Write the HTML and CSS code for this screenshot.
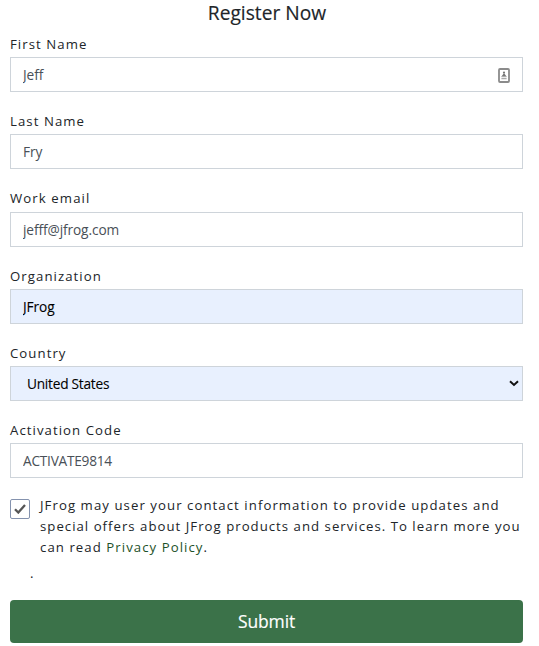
FILE: index.html
```html
<!DOCTYPE html>
<html lang="en">
<head>
<meta charset="utf-8">
<title>Register Now</title>
<link rel="stylesheet" href="styles.css">
</head>
<body>
<form class="form">
  <h1 class="title">Register Now</h1>
  <div class="field">
    <label class="label" for="first">First Name</label>
    <div class="control">
      <input class="input" id="first" type="text" value="Jeff">
      <svg class="contact" viewBox="0 0 12 15" width="12" height="15" aria-hidden="true">
        <rect x="1" y="1" width="10" height="13" rx="1" fill="#fff" stroke="#8b8b8b" stroke-width="1.8"/>
        <circle cx="6" cy="4.5" r="1.1" fill="#777"/>
        <path d="M6 5L8.2 8H3.8Z" fill="#777"/>
        <path d="M3.4 8.7h5.2M3.4 10.7h5.2" stroke="#aaa" stroke-width="1.3"/>
      </svg>
    </div>
  </div>
  <div class="field">
    <label class="label" for="last">Last Name</label>
    <div class="control"><input class="input" id="last" type="text" value="Fry"></div>
  </div>
  <div class="field">
    <label class="label label-email" for="email">Work email</label>
    <div class="control"><input class="input" id="email" type="text" value="jefff@jfrog.com"></div>
  </div>
  <div class="field">
    <label class="label" for="org">Organization</label>
    <div class="control"><input class="input filled" id="org" type="text" value="JFrog"></div>
  </div>
  <div class="field">
    <label class="label" for="country">Country</label>
    <div class="control">
      <select class="input filled select" id="country"><option>United States</option></select>
      <svg class="chevron" viewBox="0 0 10 7" width="10" height="7" aria-hidden="true">
        <path d="M1 1.3L5 5L9 1.3" fill="none" stroke="#111" stroke-width="2"/>
      </svg>
    </div>
  </div>
  <div class="field">
    <label class="label" for="code">Activation Code</label>
    <div class="control"><input class="input code" id="code" type="text" value="ACTIVATE9814"></div>
  </div>
  <div class="consent">
    <span class="checkbox" role="checkbox" aria-checked="true">
      <svg viewBox="0 0 12 10" width="12" height="10" aria-hidden="true">
        <path d="M1 5.2L4.3 8.5L11 1" fill="none" stroke="#555" stroke-width="2.3"/>
      </svg>
    </span>
    <p class="terms">JFrog may user your contact information to provide updates and<br><span class="tight">special offers about JFrog products and services. To learn more you</span><br>can read <a class="link">Privacy Policy</a>.</p>
  </div>
  <p class="dot">.</p>
  <button class="submit" type="button">Submit</button>
</form>
</body>
</html>
```
FILE: styles.css
```css
* { box-sizing: border-box; }
body {
  margin: 0;
  background: #fff;
  color: #212529;
  font: 13.2px/21px "Open Sans", "Noto Sans", sans-serif;
}
.form { width: 513px; margin-left: 10px; }
.title {
  height: 34px;
  margin: 0;
  padding-left: 1px;
  text-align: center;
  font-size: 19.2px;
  font-weight: 400;
  line-height: 25px;
  letter-spacing: 0;
  -webkit-text-stroke: 0.15px;
}
.field { height: 77.25px; }
.label {
  display: block;
  height: 23px;
  letter-spacing: 1.06px;
}
.label-email { line-height: 19px; letter-spacing: 1.1px; }
.control { position: relative; height: 35px; }
.input {
  display: block;
  width: 100%;
  height: 35px;
  margin: 0;
  padding: 0 12px;
  border: 1px solid #ced4da;
  border-radius: 0;
  outline: 0;
  background: #fff;
  color: #495057;
  font: inherit;
  font-size: 13.7px;
  letter-spacing: -0.1px;
}
.filled { background: #e8f0fe; color: #000; -webkit-text-stroke: 0.1px; }
.select { appearance: none; padding-left: 16px; letter-spacing: -0.25px; }
.code { letter-spacing: -0.25px; }
.contact { position: absolute; top: 11px; right: 13px; }
.chevron { position: absolute; top: 14px; right: 4px; }
.consent {
  display: flex;
  gap: 10px;
  height: 69px;
  margin-top: -2.5px;
}
.checkbox {
  display: flex;
  flex: none;
  align-items: center;
  justify-content: center;
  width: 20px;
  height: 20px;
  margin-top: 4px;
  border: 1px solid #8492ae;
  border-radius: 2px;
}
.terms { margin: 0; white-space: nowrap; letter-spacing: 1.06px; }
.tight { letter-spacing: 1.02px; }
.link { color: #1d5128; }
.dot { height: 36px; margin: 0; padding-left: 20px; line-height: 19px; }
.submit {
  display: block;
  width: 100%;
  height: 43px;
  padding: 0 0 1px;
  border: 0;
  border-radius: 4px;
  background: #3b7249;
  color: #fff;
  font: 17.5px/24px "Open Sans", "Noto Sans", sans-serif;
  letter-spacing: -0.15px;
  -webkit-text-stroke: 0.15px;
}
```
